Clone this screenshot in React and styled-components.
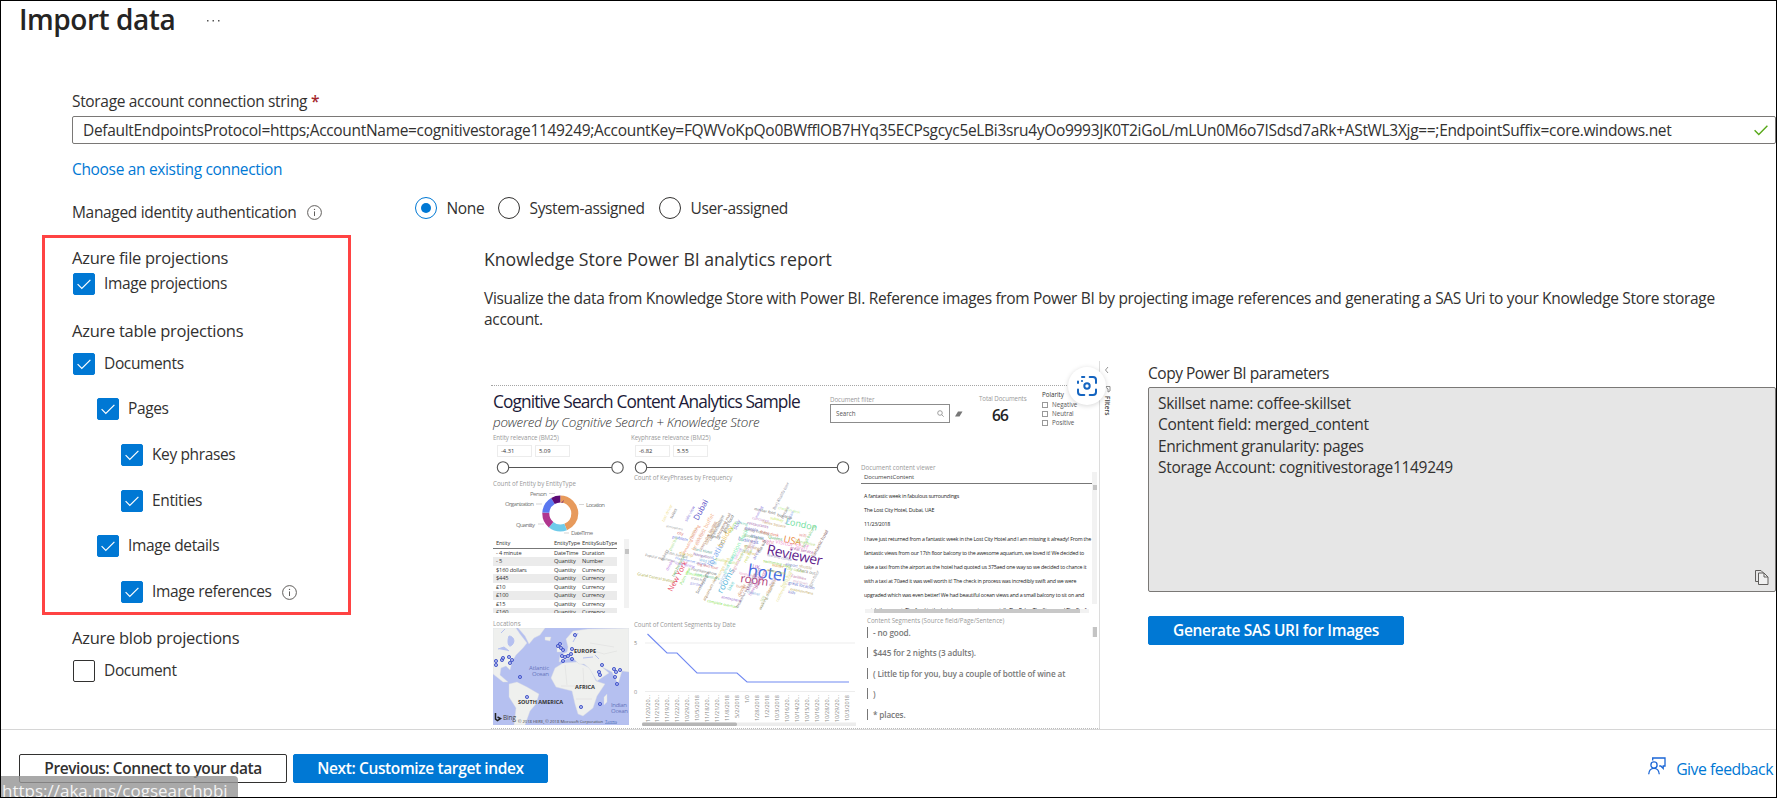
import React from 'react';
import styled, { createGlobalStyle, css } from 'styled-components';

const blue = '#0078d4';
const ink = '#323130';

const GlobalStyle = createGlobalStyle`
  *, *::before, *::after { box-sizing: border-box; }
  html, body { margin: 0; padding: 0; background: #fff; }
  body { font-family: "Open Sans", "Noto Sans", sans-serif; color: ${ink}; overflow: hidden; }
`;

/* ---------- page shell ---------- */
const Page = styled.div`
  position: relative;
  width: 1777px;
  height: 798px;
  border: 1px solid #000;
  display: flex;
  flex-direction: column;
  overflow: hidden;
  background: #fff;
`;
const Header = styled.header`
  display: flex;
  align-items: center;
  height: 36px;
  padding-left: 18px;
  flex: none;
`;
const Title = styled.h1`
  margin: 0;
  width: 188px;
  font-size: 28px;
  line-height: 36px;
  font-weight: 600;
  letter-spacing: -0.45px;
  color: #252423;
  white-space: nowrap;
`;
const Dots = styled.svg`
  display: block;
  margin-top: 4px;
`;
const Main = styled.main`
  display: flex;
  flex-direction: column;
  height: 692px;
  padding: 53px 0 0 71px;
  flex: none;
`;

/* ---------- text ---------- */
const Text = styled.span`
  display: block;
  font-size: ${(p) => p.$size || 15.5}px;
  line-height: ${(p) => p.$line || 22}px;
  letter-spacing: ${(p) => p.$track ?? -0.33}px;
  color: ${(p) => p.$color || 'inherit'};
  white-space: nowrap;
`;
const Required = styled.span`
  color: #a4262c;
  font-weight: 600;
`;
const Field = styled.div`
  display: flex;
  align-items: center;
  justify-content: space-between;
  height: 29px;
  margin: 4px 0 14px;
  padding: 0 7px 0 10px;
  border: 1px solid #7a7876;
  border-radius: 2px;
`;

/* ---------- managed identity row ---------- */
const AuthRow = styled.div`
  display: flex;
  align-items: flex-start;
  height: 26px;
  margin-top: 17px;
`;
const AuthLabel = styled.div`
  display: flex;
  align-items: center;
  gap: 10px;
  width: 343px;
  padding-top: 4px;
`;
const Radios = styled.div`
  display: flex;
`;
const RadioOption = styled.label`
  display: flex;
  align-items: center;
  height: 22px;
  gap: ${(p) => p.$gap}px;
  width: ${(p) => p.$width}px;
`;
const RadioMark = styled.span`
  display: grid;
  place-items: center;
  flex: none;
  width: 22px;
  height: 22px;
  border: 1px solid ${(p) => (p.$on ? blue : ink)};
  border-radius: 50%;
  &::after {
    content: "";
    width: 10px;
    height: 10px;
    border-radius: 50%;
    background: ${(p) => (p.$on ? blue : 'transparent')};
  }
`;

/* ---------- projections ---------- */
const Body = styled.div`
  display: flex;
  margin: 12px 0 0 -30px;
`;
const Projections = styled.section`
  width: 309px;
  flex: none;
`;
const Highlight = styled.div`
  height: 380px;
  border: 3px solid #ff4343;
  padding: 8px 0 0 27px;
`;
const BlobGroup = styled.div`
  padding: 11px 0 0 30px;
`;
const CheckRow = styled.label`
  display: flex;
  align-items: flex-start;
  height: 22px;
  margin-top: ${(p) => p.$top}px;
  padding-left: ${(p) => 1 + p.$level * 24}px;
  gap: 9px;
`;
const Box = styled.span`
  display: grid;
  place-items: center;
  flex: none;
  width: 22px;
  height: 22px;
  border-radius: 2px;
  background: ${(p) => (p.$on ? blue : '#fff')};
  border: 1px solid ${(p) => (p.$on ? blue : ink)};
`;
const InfoSlot = styled.span`
  padding: 2px 0 0 1px;
`;
const SectionGap = styled.div`
  height: 24px;
`;

/* ---------- right content ---------- */
const Content = styled.section`
  flex: 1;
  min-width: 0;
  margin-left: 133px;
  padding-top: 12px;
`;
const Description = styled.div`
  margin: 17px 0 31px;
`;
const ReportRow = styled.div`
  display: flex;
  margin-left: 7px;
`;
const Params = styled.div`
  flex: 1;
  min-width: 0;
  margin-left: 32px;
  padding-top: 1px;
`;
const ParamBox = styled.div`
  display: flex;
  justify-content: space-between;
  height: 205px;
  margin: 3px 0 24px;
  padding: 5px 6px 6px 9px;
  border: 1px solid #7a7876;
  border-radius: 2px;
  background: #e6e6e6;
`;
const CopySlot = styled.div`
  display: flex;
  align-items: flex-end;
`;

/* ---------- buttons and footer ---------- */
const Button = styled.button`
  height: 29px;
  width: ${(p) => p.$width}px;
  padding: 0 0 2px;
  font: 600 15.5px/24px "Open Sans", "Noto Sans", sans-serif;
  letter-spacing: ${(p) => p.$track}px;
  white-space: nowrap;
  border-radius: 2px;
  ${(p) =>
    p.$primary
      ? css`
          border: 1px solid ${blue};
          background: ${blue};
          color: #fff;
        `
      : css`
          border: 1px solid ${ink};
          background: #fff;
          color: ${ink};
        `}
`;
const Footer = styled.footer`
  display: flex;
  align-items: flex-start;
  height: 68px;
  flex: none;
  border-top: 1px solid #d6d6d6;
  padding: 24px 3px 0 18px;
  gap: 6px;
`;
const Feedback = styled.a`
  display: flex;
  align-items: flex-start;
  gap: 10px;
  margin: 3px 0 0 auto;
  color: ${blue};
`;
const StatusTip = styled.div`
  position: absolute;
  left: 0;
  bottom: 0;
  width: 237px;
  height: 21px;
  padding: 3px 0 0 1px;
  overflow: hidden;
  border-top-right-radius: 4px;
  background: rgba(150, 150, 150, 0.82);
  color: #f4f4f4;
  font-size: 17px;
  line-height: 24px;
  letter-spacing: 0;
  white-space: nowrap;
`;

/* ---------- report preview ---------- */
const Report = styled.div`
  position: relative;
  display: flex;
  width: 625px;
  height: 368px;
  flex: none;
  overflow: hidden;
`;
const Canvas = styled.div`
  width: 609px;
  border-right: 1px solid #dcdcdc;
  border-bottom: 1px dotted #bbb;
  flex: none;
`;
const CanvasTop = styled.div`
  height: 25px;
  border-bottom: 1px dotted #a5a5a5;
`;
const ReportHead = styled.div`
  display: flex;
  height: 45px;
`;
const ReportTitles = styled.div`
  width: 339px;
  padding: 5px 0 0 2px;
`;
const ReportTitle = styled.div`
  font-size: 17.3px;
  line-height: 22px;
  letter-spacing: -0.87px;
  color: #1c1a38;
  white-space: nowrap;
`;
const ReportSubtitle = styled.div`
  margin-top: 1px;
  font-size: 13.4px;
  line-height: 16px;
  font-style: italic;
  font-weight: 300;
  letter-spacing: -0.23px;
  color: #333;
  white-space: nowrap;
`;
const Tiny = styled.div`
  height: ${(p) => p.$h || 9}px;
  margin-top: ${(p) => p.$top || 0}px;
  margin-left: ${(p) => p.$left || 0}px;
  font-size: ${(p) => p.$size || 6.2}px;
  line-height: ${(p) => p.$h || 9}px;
  letter-spacing: ${(p) => p.$track || 0}px;
  color: ${(p) => p.$color || '#999'};
  white-space: nowrap;
`;
const FilterBlock = styled.div`
  width: 149px;
  padding-top: 9px;
`;
const SearchLine = styled.div`
  display: flex;
  align-items: center;
  gap: 5px;
`;
const SearchBox = styled.div`
  display: flex;
  align-items: center;
  justify-content: space-between;
  width: 120px;
  height: 19px;
  padding: 0 5px;
  border: 1px solid #8c8c8c;
`;
const TotalBlock = styled.div`
  width: 63px;
  padding-top: 8px;
`;
const TotalValue = styled.div`
  padding-left: 13px;
  font-size: 15.5px;
  line-height: 24px;
  font-weight: 600;
  letter-spacing: -0.8px;
  color: #222;
`;
const PolarityBlock = styled.div`
  padding-top: 4px;
`;
const PolarityItem = styled.div`
  display: flex;
  align-items: center;
  gap: 4px;
  height: 9px;
`;
const MiniBox = styled.span`
  width: 6px;
  height: 6px;
  border: 1px solid #999;
`;
const ReportBody = styled.div`
  display: flex;
  height: 297px;
`;
const Column = styled.div`
  width: ${(p) => p.$width}px;
  padding-left: ${(p) => p.$pad}px;
  padding-top: 2px;
  flex: none;
  svg { display: block; }
`;
const RangeInputs = styled.div`
  display: flex;
  gap: 3px;
  margin: 3px 0 4px;
  padding-left: 4px;
`;
const RangeInput = styled.div`
  width: 35px;
  height: 12px;
  padding-left: 3px;
  border: 1px solid #ececec;
  font-size: 5.8px;
  line-height: 10px;
  color: #333;
`;
const TableWrap = styled.div`
  display: flex;
  justify-content: space-between;
  height: 74px;
  width: 136px;
`;
const Table = styled.div`
  width: 124px;
  overflow: hidden;
`;
const TableRow = styled.div`
  display: grid;
  grid-template-columns: 58px 28px 1fr;
  height: 8.55px;
  padding-left: 3px;
  font-size: 5.7px;
  line-height: 8.4px;
  letter-spacing: -0.15px;
  color: #333;
  white-space: nowrap;
  background: ${(p) => (p.$shade ? '#ebebeb' : 'transparent')};
  ${(p) => p.$head && 'border-bottom: 1px solid #777; height: 9.5px; line-height: 8px;'}
`;
const VScroll = styled.div`
  display: flex;
  flex-direction: column;
  align-items: center;
  width: 5px;
  height: ${(p) => p.$height}px;
  background: #f2f2f2;
  &::after {
    content: "";
    width: 4px;
    height: ${(p) => p.$thumb}px;
    margin-top: ${(p) => p.$offset}px;
    background: #c4c4c4;
  }
`;
const Viewer = styled.div`
  display: flex;
  justify-content: space-between;
  width: 236px;
  height: 137px;
`;
const ViewerText = styled.div`
  width: 231px;
  overflow: hidden;
`;
const ViewerHead = styled.div`
  height: 12px;
  margin-bottom: 5px;
  padding-left: 3px;
  border-bottom: 1px solid #777;
  font-size: 6px;
  line-height: 10px;
  letter-spacing: -0.1px;
  color: #444;
`;
const ViewerLine = styled.div`
  padding-left: 3px;
  font-size: 5.3px;
  line-height: 14.2px;
  letter-spacing: -0.2px;
  color: #222;
  white-space: nowrap;
`;
const HScroll = styled.div`
  width: 224px;
  height: 4px;
  margin-left: 4px;
  padding: 0 9px;
  background: #f2f2f2;
  &::after {
    content: "";
    display: block;
    height: 4px;
    background: #c8c8c8;
  }
`;
const Segments = styled.div`
  display: flex;
  justify-content: space-between;
  width: 236px;
  padding: 2px 0 0 6px;
`;
const SegmentList = styled.div`
  display: flex;
  flex-direction: column;
  gap: 9.4px;
`;
const Segment = styled.div`
  height: 11px;
  padding-left: 5px;
  border-left: 1px solid #777;
  font-size: 8.2px;
  line-height: 11px;
  font-weight: 600;
  letter-spacing: -0.13px;
  color: #777;
  white-space: nowrap;
`;
const FilterRail = styled.div`
  display: flex;
  flex-direction: column;
  align-items: center;
  width: 14px;
  padding-top: 5px;
`;
const RailText = styled.div`
  writing-mode: vertical-rl;
  margin-top: 2px;
  font-size: 6.5px;
  line-height: 9px;
  font-weight: 600;
  color: #444;
`;
const LensBadge = styled.div`
  position: absolute;
  left: 577px;
  top: 6px;
  display: grid;
  place-items: center;
  width: 38px;
  height: 38px;
  border-radius: 50%;
  background: #fff;
  box-shadow: 0 1px 5px rgba(0, 0, 0, 0.16);
`;

/* ---------- icons ---------- */
const InfoIcon = () => (
  <svg width="15" height="15" viewBox="0 0 15 15" fill="none" stroke="#605e5c">
    <circle cx="7.5" cy="7.5" r="6.9" />
    <path d="M7.5 6.4v4.6" />
    <circle cx="7.5" cy="4.4" r="0.7" fill="#605e5c" stroke="none" />
  </svg>
);
const CheckIcon = ({ color = '#fff', sw = 1.2 }) => (
  <svg width="14" height="11" viewBox="0 0 14 11" fill="none" stroke={color} strokeWidth={sw}>
    <path d="M0.6 5.2 4.8 9.4 13.4 0.8" />
  </svg>
);
const CopyIcon = () => (
  <svg width="14" height="16" viewBox="0 0 14 16" fill="none" stroke="#605e5c" strokeWidth="1">
    <path d="M3.5 12.5h-3v-11H6l2.500 2.500" />
    <path d="M3.500 4h5.500l4 4v7.500H3.500z" fill="#f0f0f0" />
    <path d="M9 4v4h4" />
  </svg>
);
const FeedbackIcon = () => (
  <svg width="18" height="18" viewBox="0 0 18 18" fill="none" stroke="#1a66d6" strokeWidth="1.3">
    <path d="M4.700 3.500V1h12.300v8h-1.800v2.400L12.800 9h-1.600" />
    <circle cx="6" cy="8" r="3.100" />
    <path d="M0.700 17.300c.2-3.600 2.200-6 5.300-6s5 2.400 5.300 6" />
  </svg>
);
const LensIcon = () => (
  <svg width="20" height="20" viewBox="0 0 20 20" fill="none" stroke="#1464c0" strokeWidth="2">
    <path d="M1 13.500v2.500a3 3 0 0 0 3 3h3.300M12.700 19H16a3 3 0 0 0 3-3v-2.500M19 7V4a3 3 0 0 0-3-3h-3.300M7.300 1H5M1 7V5.500" strokeLinecap="round" />
    <circle cx="10" cy="10" r="2.700" />
    <circle cx="5" cy="5" r="1.100" fill="#1464c0" stroke="none" />
  </svg>
);

/* ---------- drawings inside the report ---------- */
const Slider = ({ width, from, to }) => (
  <svg width={width} height="13" fill="#fff" stroke="#555" strokeWidth="1.100">
    <path d={`M${from} 6.500H${to}`} />
    <circle cx={from} cy="6.500" r="5.700" />
    <circle cx={to} cy="6.500" r="5.700" />
  </svg>
);

const donutParts = [
  { color: '#e79a5c', len: 44 },
  { color: '#6fcbea', len: 17 },
  { color: '#b0368f', len: 15 },
  { color: '#5a78f0', len: 15.5 },
  { color: '#5c0a75', len: 8.500 },
];
const Donut = () => {
  let start = 0;
  return (
    <svg width="136" height="51" fontSize="6" fill="#777">
      <g fill="none" strokeWidth="7" transform="rotate(-90 67.300 25.500)">
        {donutParts.map((p) => {
          const offset = -start;
          start += p.len;
          return (
            <circle key={p.color} cx="67.300" cy="25.500" r="14.500" pathLength="100" stroke={p.color}
              strokeDasharray={`${p.len} ${100 - p.len}`} strokeDashoffset={offset} />
          );
        })}
      </g>
      <path d="M56 5.500h6M43 16h6M45 36h6M86 16.500h5M71 45h5" stroke="#bbb" strokeWidth="0.600" />
      <text x="37" y="8" textLength="17">Person</text>
      <text x="12" y="18" textLength="29">Organization</text>
      <text x="23" y="38.500" textLength="19">Quantity</text>
      <text x="93" y="18.500" textLength="19">Location</text>
      <text x="78" y="47" textLength="22">DateTime</text>
    </svg>
  );
};

const H = 12;
const V = -62;
const words = [
  ['Reviewer', 135, 71, 14, '#5d1a8b', H],
  ['hotel', 116, 93, 17, '#4169e1', 8],
  ['room', 109, 99, 11.5, '#b0407a', 8],
  ['USA', 152, 59, 9.5, '#e8873a', H],
  ['London', 154, 41, 9, '#6fe0a0', H],
  ['visitor staff', 144, 60, 6.5, '#f2a0d8', H],
  ['Dubai', 67, 38, 8, '#5a4fc8', V],
  ['New York', 41, 109, 7.5, '#e8425a', V],
  ['rooms', 91, 111, 9, '#5ab8dc', V],
  ['location', 81, 84, 8, '#7aa8ee', V],
  ['holiday', 91, 65, 7, '#f0c860', V],
  ['UK', 121, 85, 5.500, '#b060c8', H],
  ['business', 107, 57, 5, '#5a68c8', H],
  ['night', 131, 59, 5, '#e878a8', H],
  ['stay', 105, 47, 5.500, '#8a80d8', V],
  ['money', 76, 54, 4.200, '#555', 8],
  ['great location', 157, 101, 4.200, '#5a68c8', H],
  ['Grand Central Station', 6, 92, 3.800, '#a8a838', H],
  ['Popular experience', 14, 73, 3.400, '#777', H],
  ['Free internet access', 44, 76, 3.400, '#5a80e8', H],
  ['Fountain show', 60, 87, 3.800, '#777', H],
  ['Paris Hotel', 62, 67, 3.800, '#4c9a8c', H],
  ['Navigation', 62, 72, 3.800, '#7a5aa0', H],
  ['complete overhaul', 76, 119, 3.600, '#78e040', H],
  ['atmosphere', 90, 115, 3.600, '#8a58c8', H],
  ['problem', 41, 55, 4, '#5a68e0', H],
  ['atmosphere', 35, 44, 3, '#999', H],
  ['city', 46, 51, 4, '#d85a5a', H],
  ['Amazing building', 54, 71, 4, '#f09070', V],
  ['breakfast buffet', 64, 68, 5.500, '#f5b890', V],
  ['executive lounge', 71, 67, 4, '#a8705a', V],
  ['coffee machine', 80, 58, 4, '#777', V],
  ['shopping mall', 88, 54, 4, '#8a6a5a', V],
  ['reception desk', 98, 84, 6, '#90f0b8', V],
  ['Sunday night', 67, 111, 4, '#555', V],
  ['aquarium view', 74, 118, 4, '#a07848', V],
  ['beautiful ocean view', 107, 125, 4, '#7a6a78', V],
  ['walking distance', 130, 127, 4, '#8a8a50', V],
  ['conference room', 147, 119, 4, '#e8e088', V],
  ['Fantastic hotel', 183, 75, 4.500, '#7a5050', V],
  ['Burj Khalifa tour', 144, 27, 4, '#8a8a9a', V],
  ['minibar food', 123, 27, 3.600, '#555', H],
  ['check in desk', 147, 26, 3.600, '#b8f090', H],
  ['restaurants', 116, 41, 4, '#9a58a8', H],
  ['family holiday', 113, 47, 4, '#777', H],
  ['front desk', 129, 50, 4, '#e87858', H],
  ['people', 114, 46, 4, '#7a70c8', H],
  ['Queens', 137, 55, 4, '#48a858', H],
  ['great service', 159, 66, 4, '#a8409a', H],
  ['swimming pool', 132, 79, 4, '#8ad048', H],
  ['Check out', 166, 88, 4, '#777', H],
  ['City center', 155, 86, 3.800, '#9acd50', H],
  ['Facilities', 160, 94, 3.800, '#b86a9a', H],
  ['entertainment', 159, 107, 3.500, '#b8a048', H],
  ['kids', 157, 110, 3.800, '#5a68c8', H],
  ['lovely morning', 108, 91, 3.500, '#e890c0', H],
  ['water park', 136, 88, 3.800, '#c8c848', H],
  ['price', 90, 102, 5, '#90b8e0', V],
  ['lake', 99, 108, 5, '#6ad0d0', V],
  ['dinner', 109, 114, 4.500, '#d08a58', V],
  ['hotel guest', 120, 113, 4, '#b870c8', V],
  ['two bedroom', 43, 94, 4, '#58a858', V],
  ['Palm view', 51, 102, 4, '#80e060', V],
  ['drinks', 37, 88, 4, '#b870e0', V],
  ['side view', 56, 39, 4, '#8070d8', V],
  ['taxi driver', 33, 39, 4, '#f0e088', V],
  ['suites', 41, 36, 4, '#666', V],
  ['gym floor', 180, 104, 4, '#999', V],
  ['small balcony', 173, 65, 4, '#68c870', V],
  ['free taxi', 156, 42, 4, '#80a8f0', V],
  ['rest bar', 115, 80, 4, '#c8d848', V],
  ['area', 124, 77, 5, '#8a8ad8', V],
  ['hot tub', 129, 70, 4, '#555', V],
  ['service', 105, 77, 4, '#e8a0e0', V],
  ['tourist', 108, 68, 4, '#a0c8f0', H],
  ['quality suite', 84, 77, 4, '#c8e070', H],
  ['local dining', 44, 81, 3.800, '#a880e8', H],
  ['Elevators', 55, 91, 4, '#90f060', H],
  ['train hall', 60, 96, 3.600, '#777', H],
  ['elevator', 66, 61, 4, '#e8b0b8', V],
  ['parking', 104, 40, 3.600, '#68c8a8', H],
  ['morning', 113, 64, 4, '#b88858', H],
  ['the lobby', 84, 52, 4, '#a8a8a8', V],
  ['early check in', 76, 62, 4, '#c89858', V],
  ['great food', 94, 50, 4, '#555', V],
  ['luxury', 100, 50, 4, '#78d858', V],
  ['marina', 60, 57, 4, '#d8a078', V],
  ['great views', 94, 91, 4, '#70d8d0', V],
  ['upgrade', 102, 91, 4, '#e0a0b0', V],
  ['lounge area', 88, 95, 4, '#e8d070', V],
  ['Metro station', 118, 108, 4, '#9a6aa8', V],
  ['bathroom', 126, 106, 4.500, '#c05a90', V],
  ['Terminal', 138, 111, 4, '#e8a878', V],
  ['spa', 131, 119, 4, '#b8d8a0', V],
  ['fresh fruit', 152, 105, 4, '#d8e080', V],
  ['Wild Wadi', 68, 78, 3.800, '#70b0e0', H],
  ['Big Bus tour', 66, 82, 3.800, '#d06a70', H],
  ['Lost chambers', 64, 92, 3.600, '#60c890', H],
  ['day trip', 48, 71, 4, '#e0b048', H],
  ['Fifth Avenue', 36, 71, 3.600, '#888', H],
  ['tickets', 32, 78, 4, '#777', V],
  ['pool bar', 40, 68, 4, '#a8e088', V],
  ['garden', 59, 101, 3.800, '#a0a0e8', H],
  ['concierge', 121, 36, 3.800, '#c890d0', H],
  ['Times Square', 131, 40, 3.800, '#c8a068', H],
  ['subway', 139, 36, 3.800, '#c8e858', H],
  ['bus stop', 146, 33, 3.800, '#555', H],
  ['evening', 126, 35, 3.500, '#8870e0', V],
  ['terrace', 152, 36, 4, '#777', V],
  ['wifi', 168, 53, 4.500, '#e89088', H],
  ['Dune drive', 164, 59, 4, '#b0d870', H],
  ['Atlantis', 119, 54, 4, '#5a6ad0', H],
  ['good value', 113, 53, 3.800, '#68a868', H],
  ['tea and coffee', 136, 73, 3.800, '#9090c0', H],
  ['waiter', 141, 83, 4, '#e0a050', H],
  ['airport', 154, 82, 4, '#7078c8', H],
  ['shuttle', 168, 84, 4, '#b8a070', H],
  ['cocktail', 121, 67, 4, '#b0a0e0', V],
  ['desert', 117, 68, 4, '#d8a0a0', V],
  ['bedroom', 109, 78, 4, '#a0c060', V],
  ['kitchen', 113, 70, 3.800, '#e0c060', H],
  ['cleaner', 116, 110, 3.800, '#70a0d8', H],
  ['buffet', 105, 104, 3.800, '#d89070', H],
  ['decor', 140, 104, 4, '#a090c8', V],
  ['old town', 162, 99, 3.600, '#d0a8c8', H],
];
const WordCloud = () => (
  <svg width="228" height="138" viewBox="0 -1 228 138">
    {words.map(([w, x, y, s, c, r], i) => (
      <text key={i} fontSize={s} fill={c} transform={`translate(${x} ${y}) rotate(${r})`}
        letterSpacing={s > 10 ? -0.4 : 0}>{w}</text>
    ))}
  </svg>
);

const pins = [[3, 33], [3, 37], [9, 32], [10, 30], [16, 29], [19, 32], [17, 35], [27, 49], [34, 69], [65, 18], [68, 20], [70, 22], [67, 16], [69, 28], [72, 29], [75, 28], [78, 26], [79, 31], [70, 33], [79, 21], [82, 7], [109, 37], [106, 44], [107, 47], [121, 41], [123, 44], [122, 49], [124, 56], [127, 42], [88, 79], [107, 76]];
const MapView = () => (
  <svg width="136" height="97" viewBox="0 0 136 97">
    <rect width="136" height="97" fill="#b5c0f0" />
    <g fill="#eff0ee" stroke="#d6d9e2" strokeWidth="0.400">
      <path d="M0 0H23L27 6 34 15 30 20 23 27 19 34 17 42 13 38 8 40 7 47 15 54 10 54 0 46Z" />
      <path d="M25 0H52L47 7 41 10 36 16 32 8Z" />
      <path d="M16 56 24 54 34 59 46 66 43 76 37 83 32 97H21L23 80 16 69Z" />
      <path d="M62 40 70 35 84 34 97 40 103 53 112 56 104 68 100 80 90 88 85 86 82 76 79 63 63 59 58 50Z" />
      <path d="M66 34 67 27 74 24 75 19 73 11 80 3 95 1 136 0V44L129 43 125 56 119 44 109 39 116 45 104 53 96 40 91 36 86 36 79 29 74 31Z" />
      <path d="M64 17 69 16 70 24 64 24ZM52 9 58 9 57 13 52 12ZM111 69l3-3 0 8-3 3Z" />
    </g>
    <path d="M16 8c4 0 7 5 3 9s-5-4-3-9ZM5 21l6-2 5 4M8 5l4-4M90 30l10-1M102 27l4 4M80 14l5-9" fill="#b5c0f0" stroke="#b5c0f0" strokeWidth="1" />
    <path d="M68 58h15M72 37l2 20M90 40l1 18M83 71h16M25 72l10 3M97 15l24 4M98 22l13 4 13-3" fill="none" stroke="#dadada" strokeWidth="0.500" />
    <g fill="#8b97e8" fillOpacity="0.700" stroke="#3346c4" strokeWidth="0.800">
      {pins.map(([x, y]) => <circle key={`${x}-${y}`} cx={x} cy={y} r="1.600" />)}
    </g>
    <g fill="#333" fontSize="6" fontWeight="700">
      <text x="81" y="25" textLength="22" lengthAdjust="spacingAndGlyphs">EUROPE</text>
      <text x="82" y="61" textLength="20" lengthAdjust="spacingAndGlyphs">AFRICA</text>
      <text x="25" y="76" textLength="45" lengthAdjust="spacingAndGlyphs">SOUTH AMERICA</text>
    </g>
    <g fill="#6675bd" fontSize="6">
      <text x="36" y="42" textLength="20">Atlantic</text>
      <text x="39" y="48" textLength="17">Ocean</text>
      <text x="118" y="79" textLength="16">Indian</text>
      <text x="118" y="85" textLength="17">Ocean</text>
    </g>
    <path d="M2.500 85v6l2 1.500 3-2-3-1.500" fill="none" stroke="#222" strokeWidth="1.500" />
    <text x="10" y="91.500" fontSize="6.500" fill="#444" textLength="13">Bing</text>
    <text x="25" y="94.500" fontSize="4.300" fill="#444" textLength="85" lengthAdjust="spacingAndGlyphs">© 2018 HERE, © 2018 Microsoft Corporation</text>
    <text x="112" y="94.500" fontSize="4.300" fill="#456bb5" textDecoration="underline" textLength="12">Terms</text>
  </svg>
);

const dates = ['11/20/20...', '11/21/20...', '11/19/20...', '11/22/20...', '10/29/20...', '10/5/2018', '11/18/20...', '11/21/20...', '11/8/2018', '5/2/2018', '1/0', '1/28/2018', '1/2/2018', '10/3/2018', '10/16/20...', '10/14/20...', '10/15/20...', '10/16/20...', '10/28/20...', '10/29/20...', '10/3/2018'];
const LineChart = () => (
  <svg width="228" height="98" viewBox="-1 -0.500 228 98" fill="#888">
    <path d="M13 13.500H223M13 62H223" stroke="#e8e8e8" strokeWidth="0.800" />
    <text x="2" y="15.500" fontSize="5.500">5</text>
    <text x="2" y="64" fontSize="5.500">0</text>
    <path d="M15.500 4.500 35 23.500H45L65 43.500H105L115 52.500H217" fill="none" stroke="#7189f2" strokeWidth="1.100" />
    <g fontSize="5.500">
      {dates.map((d, i) => (
        <text key={i} textAnchor="end" transform={`translate(${17.5 + i * 9.95} 65.500) rotate(-90)`}>{d}</text>
      ))}
    </g>
    <rect x="10" y="93" width="214" height="3.500" fill="#ececec" />
    <rect x="10" y="93" width="95" height="3.500" rx="1.500" fill="#b5b5b5" />
  </svg>
);

/* ---------- composed parts ---------- */
const Check = ({ label, level = 0, top, on = true, info }) => (
  <CheckRow $level={level} $top={top}>
    <Box $on={on}>{on && <CheckIcon />}</Box>
    <Text $line={21} $track={-0.370}>{label}</Text>
    {info && <InfoSlot><InfoIcon /></InfoSlot>}
  </CheckRow>
);

const rows = [
  ['- 4 minute', 'DateTime', 'Duration'],
  ['- 5', 'Quantity', 'Number'],
  ['$160 dollars', 'Quantity', 'Currency'],
  ['$445', 'Quantity', 'Currency'],
  ['£10', 'Quantity', 'Currency'],
  ['£100', 'Quantity', 'Currency'],
  ['£15', 'Quantity', 'Currency'],
  ['£160', 'Quantity', 'Currency'],
];
const reviewLines = [
  'A fantastic week in fabulous surroundings',
  'The Lost City Hotel, Dubai, UAE',
  '11/23/2018',
  'I have just returned from a fantastic week in the Lost City Hotel and I am missing it already! From the',
  'fantastic views from our 17th floor balcony to the awesome aquarium, we loved it! We decided to',
  'take a taxi from the airport as the hotel had quoted us 375aed one way so we decided to chance it',
  'with a taxi at 70aed it was well worth it! The check in process was incredibly swift and we were',
  'upgraded which was even better! We had beautiful ocean views and a small balcony to sit on and',
  'watch the sunset. The food in the hotel was very nice, especially The Palm, The Steps and The Reef',
];
const segments = ['- no good.', '$445 for 2 nights (3 adults).', '( Little tip for you, buy a couple of bottle of wine at', ')', '* places.'];

const ReportPreview = () => (
  <Report>
    <Canvas>
      <CanvasTop />
      <ReportHead>
        <ReportTitles>
          <ReportTitle>Cognitive Search Content Analytics Sample</ReportTitle>
          <ReportSubtitle>powered by Cognitive Search + Knowledge Store</ReportSubtitle>
        </ReportTitles>
        <FilterBlock>
          <Tiny $track={-0.050}>Document filter</Tiny>
          <SearchLine>
            <SearchBox>
              <Tiny $color="#555">Search</Tiny>
              <svg width="7" height="7" fill="none" stroke="#888" strokeWidth="0.800"><circle cx="3" cy="3" r="2.300" /><path d="m4.700 4.700 2 2" /></svg>
            </SearchBox>
            <svg width="8" height="6"><path d="m3 0.500 4.500 0-3 5H0Z" fill="#777" /></svg>
          </SearchLine>
        </FilterBlock>
        <TotalBlock>
          <Tiny $track={-0.100}>Total Documents</Tiny>
          <TotalValue>66</TotalValue>
        </TotalBlock>
        <PolarityBlock>
          <Tiny $color="#333" $h={10}>Polarity</Tiny>
          {['Negative', 'Neutral', 'Positive'].map((t) => (
            <PolarityItem key={t}><MiniBox /><Tiny $color="#555">{t}</Tiny></PolarityItem>
          ))}
        </PolarityBlock>
      </ReportHead>
      <ReportBody>
        <Column $width={140} $pad={2}>
          <Tiny $track={-0.080}>Entity relevance (BM25)</Tiny>
          <RangeInputs><RangeInput>-4.31</RangeInput><RangeInput>5.09</RangeInput></RangeInputs>
          <Slider width={136} from={10} to={124.500} />
          <Tiny $top={5}>Count of Entity by EntityType</Tiny>
          <Donut />
          <TableWrap>
            <Table>
              <TableRow $head><span>Entity</span><span>EntityType</span><span>EntitySubType</span></TableRow>
              {rows.map((r, i) => (
                <TableRow key={r[0]} $shade={i % 2 === 1}>{r.map((c, j) => <span key={j}>{c}</span>)}</TableRow>
              ))}
            </Table>
            <VScroll $height={69} $thumb={5} $offset={10} />
          </TableWrap>
          <Tiny $top={6}>Locations</Tiny>
          <MapView />
        </Column>
        <Column $width={230} $pad={0}>
          <Tiny $track={-0.080}>Keyphrase relevance (BM25)</Tiny>
          <RangeInputs><RangeInput>-6.82</RangeInput><RangeInput>5.55</RangeInput></RangeInputs>
          <Slider width={228} from={10} to={212} />
          <Tiny $h={8} $left={3} $track={-0.050}>Count of KeyPhrases by Frequency</Tiny>
          <WordCloud />
          <Tiny $left={3} $track={-0.050}>Count of Content Segments by Date</Tiny>
          <LineChart />
        </Column>
        <Column $width={238} $pad={0}>
          <Tiny $top={31} $h={8}>Document content viewer</Tiny>
          <Viewer>
            <ViewerText>
              <ViewerHead>DocumentContent</ViewerHead>
              {reviewLines.map((t) => <ViewerLine key={t}>{t}</ViewerLine>)}
            </ViewerText>
            <VScroll $height={132} $thumb={5} $offset={13} />
          </Viewer>
          <HScroll />
          <Tiny $top={3} $left={6}>Content Segments (Source field/Page/Sentence)</Tiny>
          <Segments>
            <SegmentList>{segments.map((s) => <Segment key={s}>{s}</Segment>)}</SegmentList>
            <VScroll $height={10} $thumb={10} $offset={0} />
          </Segments>
        </Column>
      </ReportBody>
    </Canvas>
    <FilterRail>
      <svg width="8" height="28" fill="none" stroke="#777" strokeWidth="0.800"><path d="M5 1 2.500 4 5 7M7 20.500H2l3 2.500v3l2-1z" /></svg>
      <RailText>Filters</RailText>
    </FilterRail>
    <LensBadge><LensIcon /></LensBadge>
  </Report>
);

export default function App() {
  return (
    <Page>
      <GlobalStyle />
      <Header>
        <Title>Import data</Title>
        <Dots width="14" height="2" fill="#555"><rect x="0" width="1.500" height="1.500" /><rect x="5.500" width="1.500" height="1.500" /><rect x="11" width="1.500" height="1.500" /></Dots>
      </Header>
      <Main>
        <Text $track={-0.330}>Storage account connection string <Required>*</Required></Text>
        <Field>
          <Text $track={-0.312}>DefaultEndpointsProtocol=https;AccountName=cognitivestorage1149249;AccountKey=FQWVoKpQo0BWfflOB7HYq35ECPsgcyc5eLBi3sru4yOo9993JK0T2iGoL/mLUn0M6o7ISdsd7aRk+AStWL3Xjg==;EndpointSuffix=core.windows.net</Text>
          <CheckIcon color="#57a818" sw={1.400} />
        </Field>
        <Text $color={blue} $track={-0.330}>Choose an existing connection</Text>
        <AuthRow>
          <AuthLabel><Text>Managed identity authentication</Text><InfoIcon /></AuthLabel>
          <Radios>
            <RadioOption $width={83} $gap={9.500}><RadioMark $on /><Text>None</Text></RadioOption>
            <RadioOption $width={161} $gap={9.500}><RadioMark /><Text $track={-0.360}>System-assigned</Text></RadioOption>
            <RadioOption $gap={9.500}><RadioMark /><Text $track={-0.360}>User-assigned</Text></RadioOption>
          </Radios>
        </AuthRow>
        <Body>
          <Projections>
            <Highlight>
              <Text $size={16.500} $line={23} $track={-0.270}>Azure file projections</Text>
              <Check label="Image projections" top={4} />
              <SectionGap />
              <Text $size={16.500} $line={23} $track={-0.270}>Azure table projections</Text>
              <Check label="Documents" top={11} />
              <Check label="Pages" level={1} top={23} />
              <Check label="Key phrases" level={2} top={24} />
              <Check label="Entities" level={2} top={24} />
              <Check label="Image details" level={1} top={23} />
              <Check label="Image references" level={2} top={24} info />
            </Highlight>
            <BlobGroup>
              <Text $size={16.500} $line={23} $track={-0.270}>Azure blob projections</Text>
              <Check label="Document" top={11} on={false} />
            </BlobGroup>
          </Projections>
          <Content>
            <Text $size={17.700} $line={24} $track={-0.050}>Knowledge Store Power BI analytics report</Text>
            <Description>
              <Text $line={21} $track={-0.330}>Visualize the data from Knowledge Store with Power BI. Reference images from Power BI by projecting image references and generating a SAS Uri to your Knowledge Store storage</Text>
              <Text $line={21}>account.</Text>
            </Description>
            <ReportRow>
              <ReportPreview />
              <Params>
                <Text $track={-0.480}>Copy Power BI parameters</Text>
                <ParamBox>
                  <div>
                    <Text $line={21.300} $track={-0.300}>Skillset name: coffee-skillset</Text>
                    <Text $line={21.300} $track={-0.300}>Content field: merged_content</Text>
                    <Text $line={21.300} $track={-0.380}>Enrichment granularity: pages</Text>
                    <Text $line={21.300} $track={-0.300}>Storage Account: cognitivestorage1149249</Text>
                  </div>
                  <CopySlot><CopyIcon /></CopySlot>
                </ParamBox>
                <Button $primary $width={256} $track={-0.320}>Generate SAS URI for Images</Button>
              </Params>
            </ReportRow>
          </Content>
        </Body>
      </Main>
      <Footer>
        <Button $width={268} $track={-0.430}>Previous: Connect to your data</Button>
        <Button $primary $width={255} $track={-0.380}>Next: Customize target index</Button>
        <Feedback><FeedbackIcon /><Text $size={15.800} $line={24} $track={-0.500}>Give feedback</Text></Feedback>
      </Footer>
      <StatusTip>https://aka.ms/cogsearchpbi</StatusTip>
    </Page>
  );
}
